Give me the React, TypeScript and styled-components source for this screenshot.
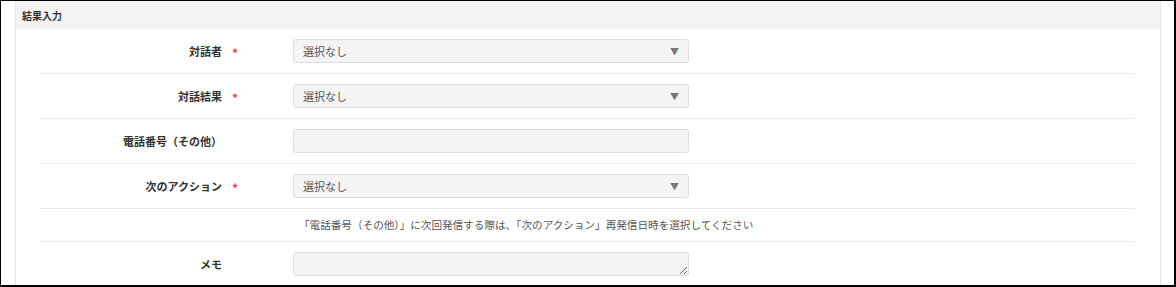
import React from "react";
import styled, { createGlobalStyle } from "styled-components";

const Global = createGlobalStyle`
  html, body { margin: 0; padding: 0; background: #fff; }
  body { font-family: "Noto Sans CJK JP", "Noto Sans", sans-serif; color: #333; }
  * { box-sizing: border-box; }
`;

const Frame = styled.div`
  width: 1176px;
  height: 287px;
  border-style: solid;
  border-color: #000;
  border-width: 1px 2px 2px 1px;
  padding: 0 13px 0 14px;
  overflow: hidden;
  background: #fff;
`;

const Panel = styled.section`
  height: 100%;
  border-left: 1px solid #e4e4e4;
  border-right: 1px solid #e4e4e4;
`;

const PanelHeader = styled.div`
  height: 28px;
  background: #f3f3f3;
  display: flex;
  align-items: center;
  padding-left: 6px;
  font-size: 10px;
  font-weight: 700;
  color: #333;
`;

const Body = styled.div`
  padding: 0 25px 0 24px;
`;

const Row = styled.div<{ $compact?: boolean }>`
  display: flex;
  align-items: center;
  border-bottom: 1px solid #ececec;
  padding: ${(p) => (p.$compact ? "9px 0" : "10px 0")};
`;

const Label = styled.div`
  width: 182px;
  flex: none;
  text-align: right;
  font-size: 11px;
  font-weight: 700;
  color: #333;
  line-height: 14px;
`;

const Marker = styled.div`
  width: 71px;
  flex: none;
  padding-left: 10px;
  color: #e8405a;
  font-size: 12px;
  font-weight: 700;
  line-height: 14px;
  padding-top: 3px;
`;

const Control = styled.div`
  width: 396px;
  height: 24px;
  flex: none;
  background: #f4f4f4;
  border: 1px solid #dcdcdc;
  border-radius: 3px;
  display: flex;
  align-items: center;
  justify-content: space-between;
  padding: 0 9px 0 9px;
  font-size: 11px;
  color: #555;
`;

const Arrow = styled.span`
  font-size: 9px;
  color: #777;
  line-height: 1;
`;

const Memo = styled.textarea`
  width: 396px;
  height: 24px;
  flex: none;
  background: #f4f4f4;
  border: 1px solid #dcdcdc;
  border-radius: 3px;
  resize: vertical;
  padding: 0;
  margin: 0;
  display: block;
  outline: none;
`;

const Note = styled.div`
  margin-left: 259px;
  font-size: 10.6px;
  line-height: 14px;
  color: #555;
  white-space: nowrap;
`;

type Field = { label: string; required?: boolean; kind: "select" | "input" };

const fields: Field[] = [
  { label: "対話者", required: true, kind: "select" },
  { label: "対話結果", required: true, kind: "select" },
  { label: "電話番号（その他）", kind: "input" },
  { label: "次のアクション", required: true, kind: "select" },
];

export default function App() {
  return (
    <>
      <Global />
      <Frame>
        <Panel>
          <PanelHeader>結果入力</PanelHeader>
          <Body>
            {fields.map((f) => (
              <Row key={f.label}>
                <Label>{f.label}</Label>
                <Marker>{f.required ? "*" : ""}</Marker>
                <Control>
                  {f.kind === "select" && (
                    <>
                      <span>選択なし</span>
                      <Arrow>▼</Arrow>
                    </>
                  )}
                </Control>
              </Row>
            ))}
            <Row $compact>
              <Note>
                「電話番号（その他）」に次回発信する際は、「次のアクション」再発信日時を選択してください
              </Note>
            </Row>
            <Row>
              <Label>メモ</Label>
              <Marker />
              <Memo />
            </Row>
          </Body>
        </Panel>
      </Frame>
    </>
  );
}
